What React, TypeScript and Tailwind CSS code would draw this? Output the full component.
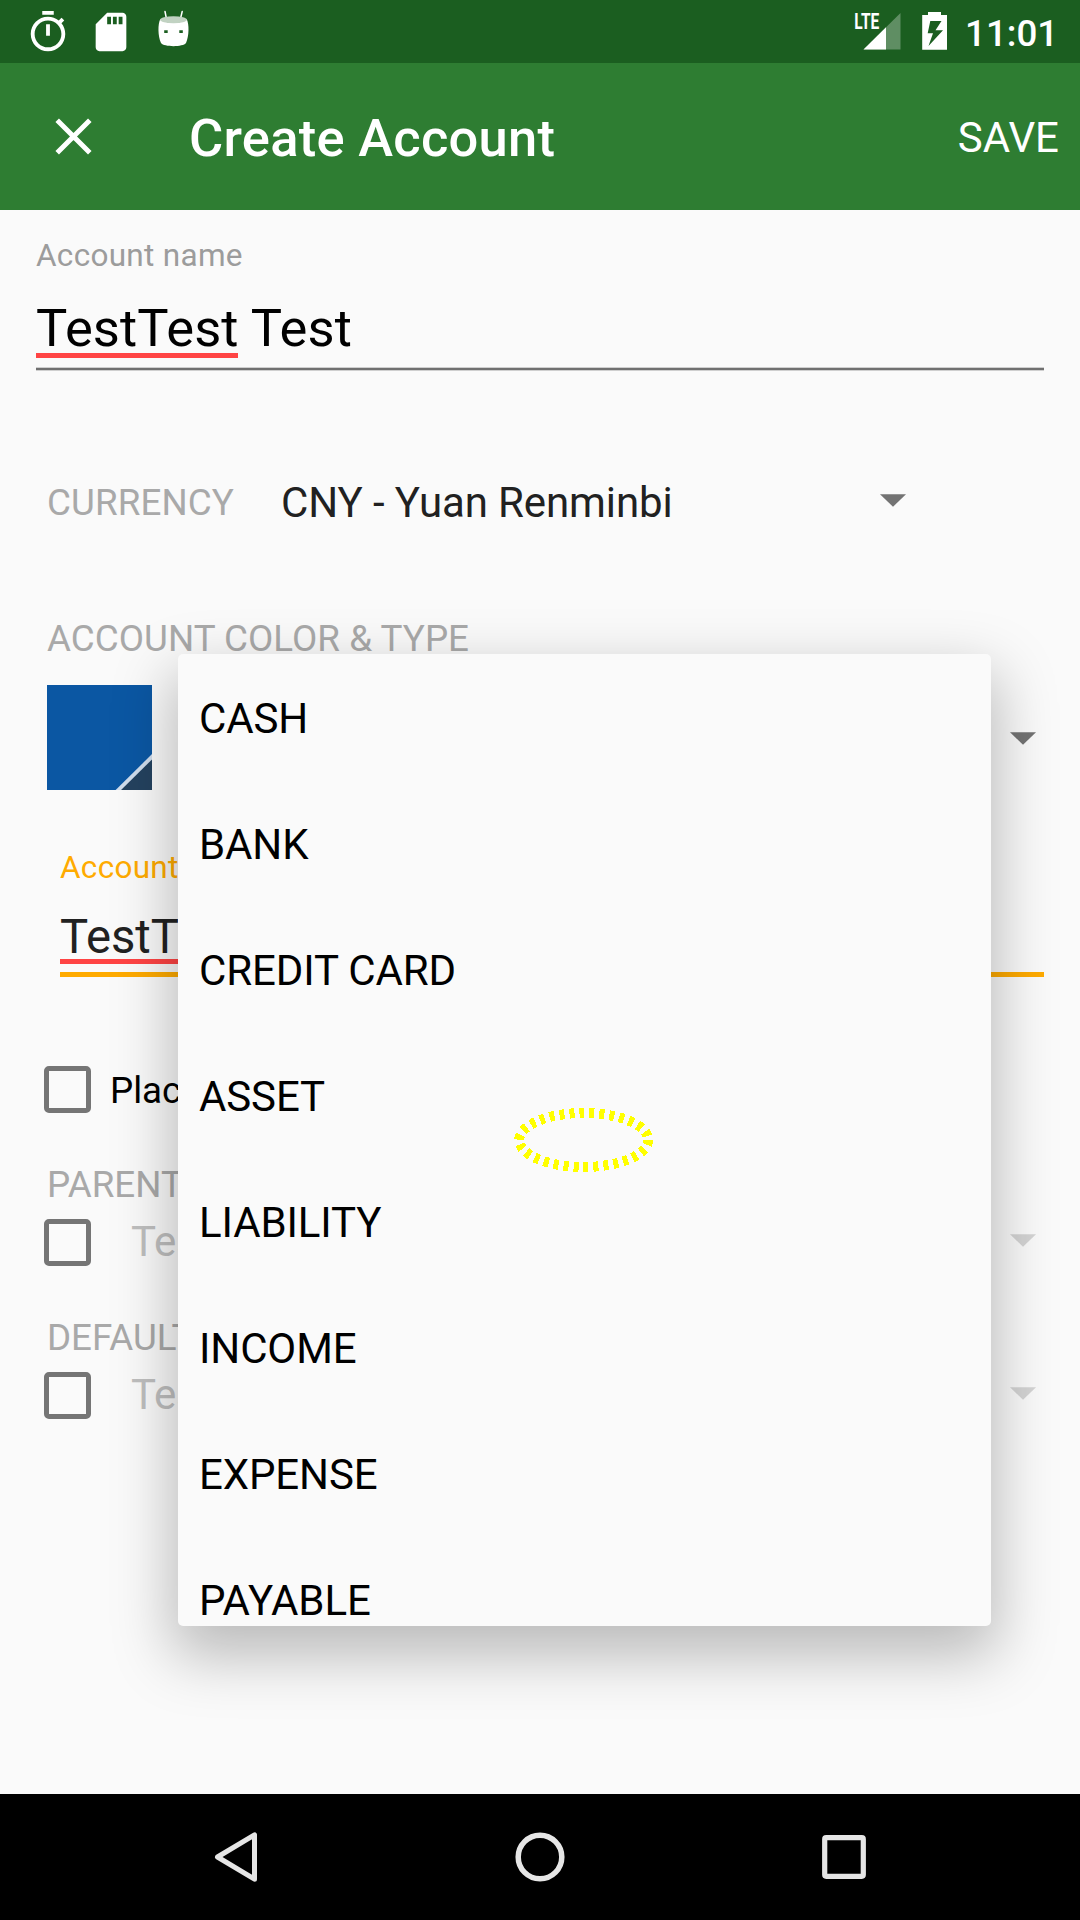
import React from "react";

const ACCOUNT_TYPES = ["CASH", "BANK", "CREDIT CARD", "ASSET", "LIABILITY", "INCOME", "EXPENSE", "PAYABLE"];

function StatusBar() {
  return (
    <div className="flex h-[63px] items-start bg-[#1b5e20] pl-[24.500px] text-white">
      <svg className="mt-[8.500px] h-[46px] w-[46px] shrink-0" viewBox="0 0 24 24" fill="currentColor">
        <path d="M15 1H9v2h6V1zm-4 13h2V8h-2v6zm8.03-6.61 1.42-1.42c-.43-.51-.9-.99-1.41-1.41l-1.42 1.42C16.07 4.74 14.12 4 12 4c-4.97 0-9 4.03-9 9s4.02 9 9 9 9-4.03 9-9c0-2.12-.74-4.07-1.97-5.61zM12 20c-3.87 0-7-3.13-7-7s3.13-7 7-7 7 3.13 7 7-3.13 7-7 7z" />
      </svg>
      <svg className="ml-[17px] mt-[8.500px] h-[46px] w-[46px] shrink-0" viewBox="0 0 24 24" fill="currentColor">
        <path d="M18 2h-8L4.02 8 4 20c0 1.1.9 2 2 2h12c1.1 0 2-.9 2-2V4c0-1.1-.9-2-2-2zm-6 6h-2V4h2v4zm3 0h-2V4h2v4zm3 0h-2V4h2v4z" />
      </svg>
      <svg className="ml-[20.500px] mt-[8px] h-[42px] w-[40px] shrink-0" viewBox="154 8 40 42" fill="currentColor">
        <path d="M165 11.5L166.5 19M182.200 11.500L180.400 19" fill="none" stroke="currentColor" strokeWidth="1.500" strokeLinecap="round" />
        <path
          fillRule="evenodd"
          d="M160.300 19C164 24 183 24 186.700 19C189.300 24 189.200 36 186 43C183 47.200 164 47.200 161 43C157.800 36 157.700 24 160.300 19ZM164.200 30.200V33H167.700V30.200ZM179.300 30.200V33H182.800V30.200Z"
        />
        <ellipse cx="173.500" cy="19.800" rx="13.400" ry="3.500" fill="#c1d2c2" />
      </svg>
      <svg className="ml-auto h-[63px] w-[52px] shrink-0" viewBox="852 0 52 63">
        <path d="M863.500 49.500H900.500V13Z" fill="#fff" fillOpacity="0.3" />
        <path d="M863.500 49.500H886V27.300Z" fill="#fff" />
        <text x="854.300" y="29.300" fill="#fff" fontFamily="Roboto" fontWeight="700" fontSize="22.500" textLength="25" lengthAdjust="spacingAndGlyphs">
          LTE
        </text>
      </svg>
      <svg className="ml-[14px] h-[63px] w-[34px] shrink-0" viewBox="918 0 34 63">
        <path
          fillRule="evenodd"
          fill="#fff"
          d="M922.200 15H928V12H941V15H947V49.800H922.200ZM930.300 21L927.700 33.200H933L928.500 46L943 30.300H935.500L941.500 21Z"
        />
      </svg>
      <span className="ml-[13px] mr-[24px] w-[91px] whitespace-nowrap text-[36.75px] font-medium leading-[67px]">11:01</span>
    </div>
  );
}

function AppBar() {
  return (
    <div className="flex h-[147px] items-center bg-[#2e7d32] text-white">
      <svg className="ml-[55px] h-[38px] w-[38px]" viewBox="0 0 38 38">
        <path d="M2.200 2.200L34.800 34.800M34.800 2.200L2.200 34.800" stroke="#fff" strokeWidth="5" />
      </svg>
      <h1 className="ml-[96px] pt-[3px] text-[52.5px] font-medium leading-[62px] tracking-[0.25px]">Create Account</h1>
      <button className="ml-auto mr-[21px] pt-[2px] text-[42px] leading-[50px]">SAVE</button>
    </div>
  );
}

function Caret({ className }: { className: string }) {
  return (
    <svg className={className} width="26" height="13" viewBox="0 0 26 13" fill="currentColor">
      <path d="M0 0.300H26L13 12.700Z" />
    </svg>
  );
}

function Checkbox() {
  return <span className="block h-[47px] w-[47px] shrink-0 rounded-[5px] border-[5px] border-[#757575]" />;
}

function AccountForm() {
  return (
    <div className="flex flex-col">
      <div className="mx-[36px] mt-[26px] flex flex-col">
        <label className="text-[31.5px] leading-[40px] tracking-[0.3px] text-[#9c9c9c]">Account name</label>
        <div className="mt-[22px] text-[52.5px] leading-[60px] tracking-[0.1px] text-black">
          <span className="relative">
            TestTest
            <span className="absolute bottom-[1px] left-0 h-[5px] w-[202px] bg-[#ff4444]" />
          </span>{" "}
          Test
        </div>
        <div className="mt-[9px] h-[4px] border-y border-[#cfcfcf] bg-[#707070]" />
      </div>

      <div className="mt-[102px] flex h-[60px] items-center pl-[47px]">
        <span className="w-[234px] text-[36.75px] leading-[60px] tracking-[0.1px] text-[#a9a9a9]">CURRENCY</span>
        <span className="w-[598px] text-[42px] leading-[60px] tracking-[-0.12px] text-[#212121]">CNY - Yuan Renminbi</span>
        <Caret className="-mt-[5px] ml-[1px] text-[#737373]" />
      </div>

      <div className="mt-[81px] pl-[47px] text-[36.75px] leading-[50px] tracking-[0.04px] text-[#a9a9a9]">ACCOUNT COLOR &amp; TYPE</div>
      <div className="mt-[21px] flex h-[105px] justify-between pl-[47px] pr-[44.500px]">
        <svg width="105" height="105" viewBox="0 0 105 105">
          <path d="M0 0H105V105H0Z" fill="#0b57a3" />
          <path d="M105 71V105H71Z" fill="#24425f" />
          <path d="M66 108L108 66.500" stroke="#d0dded" strokeWidth="3.800" transform="translate(1 1.300)" />
        </svg>
        <Caret className="mt-[47px] text-[#737373]" />
      </div>

      <div className="ml-[60px] mr-[36px] mt-[58px] flex flex-col">
        <label className="text-[31.5px] leading-[40px] tracking-[0.3px] text-[#ffab00]">Account description</label>
        <div className="mt-[19px] text-[47.25px] leading-[60px] text-[#212121]">
          <span className="relative">
            TestTest
            <span className="absolute bottom-[1px] left-0 h-[5px] w-full bg-[#ff4444]" />
          </span>
        </div>
        <div className="mt-[5px] h-[5px] bg-[#ffab00]" />
      </div>

      <div className="mt-[88px] flex h-[48px] items-center gap-[19px] pl-[44px] text-[36.75px] text-black">
        <Checkbox />
        <span className="pt-[3px] leading-[50px]">Placeholder account</span>
      </div>

      <div className="mt-[47px] pl-[47px] text-[36.75px] leading-[50px] text-[#a9a9a9]">PARENT ACCOUNT</div>
      <div className="mt-[8px] flex h-[48px] items-center pl-[44px] pr-[44.500px] text-[42px] text-[#bfbfbf]">
        <Checkbox />
        <span className="ml-[40px] leading-[50px]">TestTest</span>
        <Caret className="-mt-[4px] ml-auto text-[#d4d4d4]" />
      </div>

      <div className="mt-[47px] pl-[47px] text-[36.75px] leading-[50px] text-[#a9a9a9]">DEFAULT TRANSFER ACCOUNT</div>
      <div className="mt-[8px] flex h-[48px] items-center pl-[44px] pr-[44.500px] text-[42px] text-[#bfbfbf]">
        <Checkbox />
        <span className="ml-[40px] leading-[50px]">TestTest</span>
        <Caret className="-mt-[4px] ml-auto text-[#d4d4d4]" />
      </div>
    </div>
  );
}

function TypeMenu() {
  return (
    <ul className="absolute left-[178px] top-[654px] h-[972px] w-[813px] overflow-hidden rounded-[5px] bg-[#fafafa] pt-[2px] shadow-[0_24px_60px_6px_rgba(0,0,0,0.26)]">
      {ACCOUNT_TYPES.map((type) => (
        <li key={type} className="h-[126px] pl-[21px] text-[42px] leading-[126px] tracking-[-0.12px] text-black">
          {type}
        </li>
      ))}
    </ul>
  );
}

function NavBar() {
  return (
    <div className="flex h-[126px] items-center justify-between bg-black pl-[211px] pr-[211px]">
      <svg width="50" height="54" viewBox="211 1830 50 54">
        <path d="M217.500 1857L254.500 1834.800V1879.200Z" fill="none" stroke="#e6e6e6" strokeWidth="5" strokeLinejoin="round" />
      </svg>
      <svg width="54" height="54" viewBox="0 0 54 54">
        <circle cx="27" cy="27" r="21.800" fill="none" stroke="#e6e6e6" strokeWidth="5.500" />
      </svg>
      <svg width="50" height="54" viewBox="819 1830 50 54">
        <rect x="824.700" y="1837.700" width="38.600" height="38.600" rx="1.500" fill="none" stroke="#e6e6e6" strokeWidth="5.200" />
      </svg>
    </div>
  );
}

export default function App() {
  return (
    <div className="relative flex h-[1920px] w-[1080px] flex-col overflow-hidden bg-[#fafafa] font-[Roboto,sans-serif]">
      <StatusBar />
      <AppBar />
      <main className="flex-1">
        <AccountForm />
      </main>
      <NavBar />
      <TypeMenu />
      <svg className="absolute left-[510px] top-[1104px]" width="148" height="72" viewBox="510 1104 148 72">
        <ellipse cx="583.700" cy="1140" rx="64.500" ry="27" fill="none" stroke="#ffff00" strokeWidth="10" strokeDasharray="5 5" shapeRendering="crispEdges" />
      </svg>
    </div>
  );
}
